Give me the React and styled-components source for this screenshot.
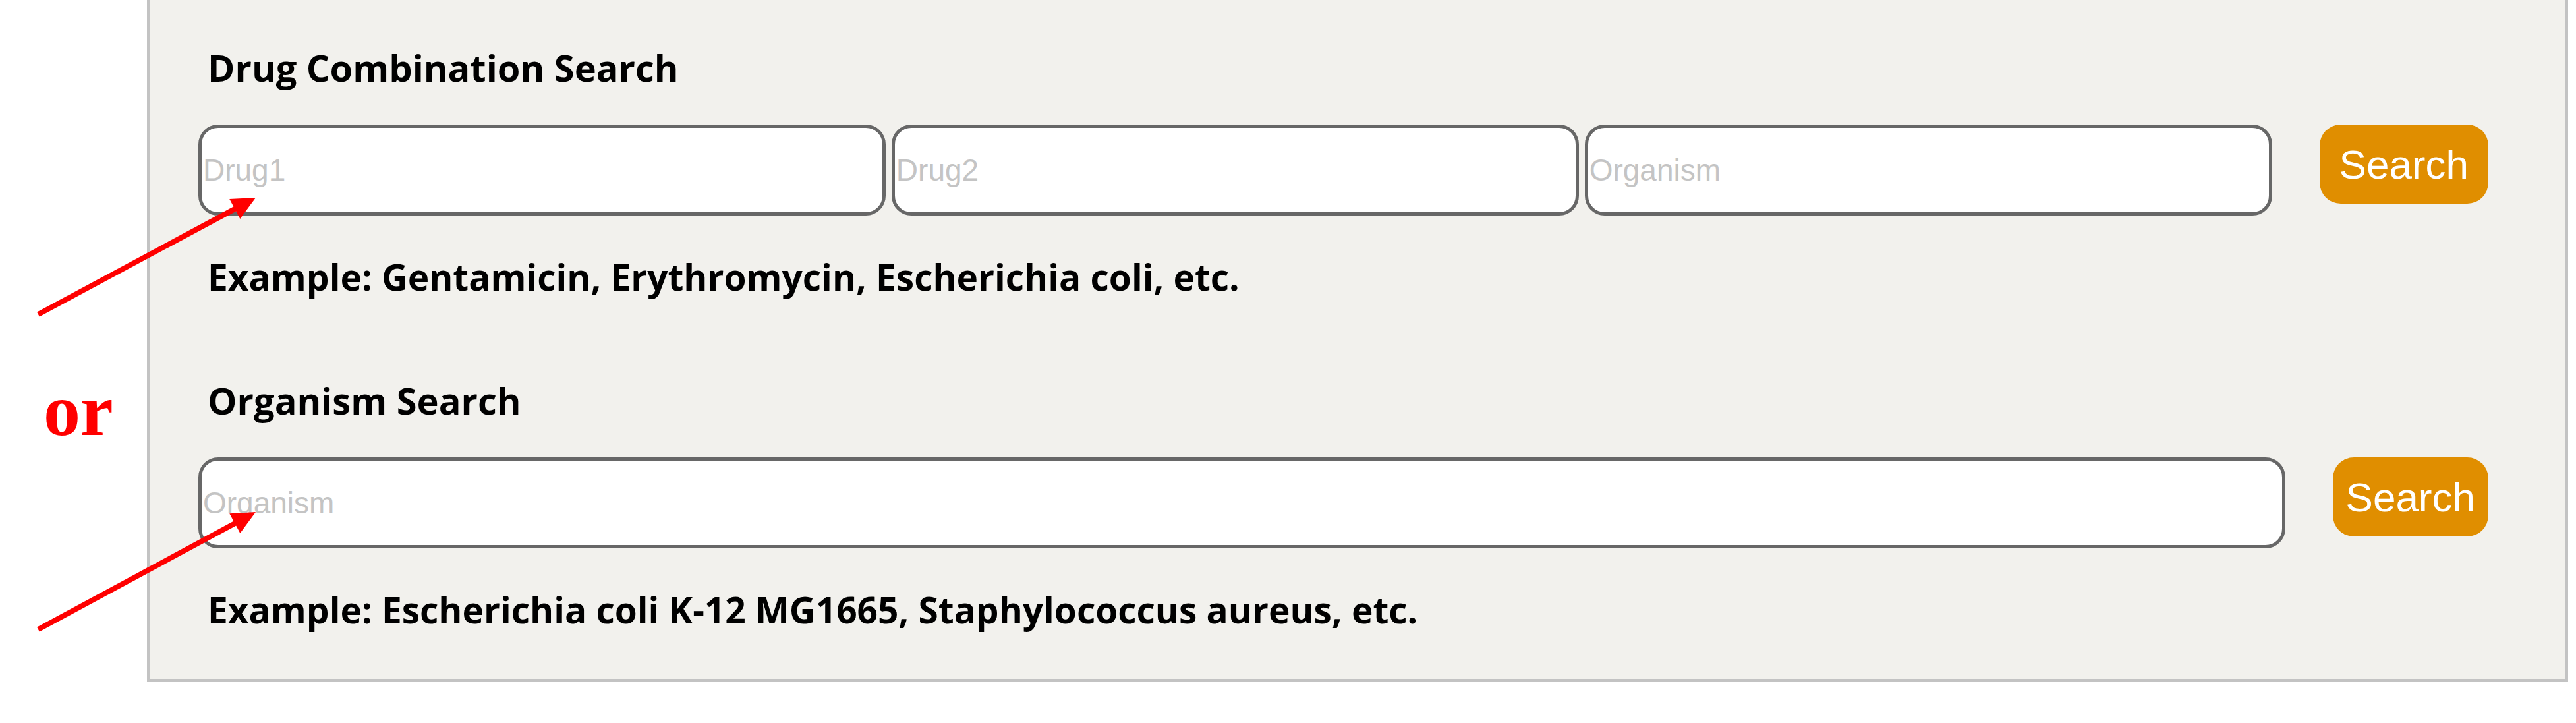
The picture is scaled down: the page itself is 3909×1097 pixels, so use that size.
import styled, { createGlobalStyle } from 'styled-components'

const GlobalStyle = createGlobalStyle`
  body {
    margin: 0;
    background: #ffffff;
  }
  * {
    box-sizing: border-box;
  }
`

const sections = [
  {
    title: 'Drug Combination Search',
    fields: ['Drug1', 'Drug2', 'Organism'],
    example: 'Example: Gentamicin, Erythromycin, Escherichia coli, etc.',
    pad: 30,
  },
  {
    title: 'Organism Search',
    fields: ['Organism'],
    example: 'Example: Escherichia coli K-12 MG1665, Staphylococcus aureus, etc.',
    pad: 20,
  },
]

const arrows = [
  { x1: 58, y1: 477, x2: 388, y2: 300 },
  { x1: 58, y1: 955, x2: 388, y2: 777 },
]

const Arrow = ({ x1, y1, x2, y2 }) => {
  const dx = x2 - x1
  const dy = y2 - y1
  const len = Math.hypot(dx, dy)
  const ux = dx / len
  const uy = dy / len
  const bx = x2 - ux * 36
  const by = y2 - uy * 36
  const nx = -uy * 17
  const ny = ux * 17
  return (
    <g>
      <line x1={x1} y1={y1} x2={bx + ux * 4} y2={by + uy * 4} stroke="#ff0000" strokeWidth="8" />
      <polygon points={`${x2},${y2} ${bx + nx},${by + ny} ${bx - nx},${by - ny}`} fill="#ff0000" />
    </g>
  )
}

const App = () => {
  return (
    <Page>
      <GlobalStyle />
      <Gutter>
        <OrLabel>or</OrLabel>
      </Gutter>
      <Panel>
        {sections.map((s) => (
          <Section key={s.title}>
            <Title>{s.title}</Title>
            <SearchRow>
              <Fields>
                {s.fields.map((f) => (
                  <Field key={f} placeholder={f} />
                ))}
              </Fields>
              <SearchButton $pad={s.pad}>Search</SearchButton>
            </SearchRow>
            <Example>{s.example}</Example>
          </Section>
        ))}
      </Panel>
      <Overlay width="3909" height="1097" viewBox="0 0 3909 1097">
        {arrows.map((a, i) => (
          <Arrow key={i} {...a} />
        ))}
      </Overlay>
    </Page>
  )
}

const Page = styled.div`
  position: relative;
  display: flex;
  width: 3909px;
  height: 1097px;
  padding-right: 12px;
  overflow: hidden;
`

const Gutter = styled.div`
  width: 223px;
  flex-shrink: 0;
  padding-top: 566px;
  padding-left: 66px;
`

const OrLabel = styled.div`
  font-family: 'Liberation Serif', 'Times New Roman', serif;
  font-weight: bold;
  font-size: 112px;
  line-height: 112px;
  color: #ff0000;
`

const Panel = styled.div`
  flex: 1;
  align-self: flex-start;
  display: flex;
  flex-direction: column;
  gap: 117px;
  background: #f2f1ed;
  border: 5px solid #c3c3c3;
  border-top: none;
  padding: 67px 116px 70px 73px;
`

const Section = styled.section`
  display: flex;
  flex-direction: column;
`

const Title = styled.h3`
  margin: 0 0 52px 14px;
  font-family: 'Open Sans', 'Noto Sans', sans-serif;
  font-weight: 700;
  font-size: 56px;
  line-height: 70px;
  color: #000;
`

const SearchRow = styled.div`
  display: flex;
  align-items: flex-start;
  gap: 72px;
`

const Fields = styled.div`
  flex: 1;
  display: flex;
  gap: 9px;
`

const Field = styled.input`
  flex: 1;
  min-width: 0;
  height: 138px;
  padding: 0 2px;
  background: #ffffff;
  border: 5px solid #676767;
  border-radius: 30px;
  font-family: 'Liberation Sans', Arial, sans-serif;
  font-size: 46px;
  outline: none;

  &::placeholder {
    color: #c4c4c4;
  }
`

const SearchButton = styled.button`
  height: 120px;
  padding: 0 ${({ $pad }) => $pad}px;
  background: #e08e00;
  color: #ffffff;
  border: none;
  border-radius: 32px;
  font-family: 'Liberation Sans', Arial, sans-serif;
  font-size: 62px;
  cursor: pointer;
`

const Example = styled.p`
  margin: 58px 0 0 14px;
  font-family: 'Open Sans', 'Noto Sans', sans-serif;
  font-weight: 700;
  font-size: 55px;
  line-height: 70px;
  color: #000;
`

const Overlay = styled.svg`
  position: absolute;
  top: 0;
  left: 0;
  pointer-events: none;
`

export default App
